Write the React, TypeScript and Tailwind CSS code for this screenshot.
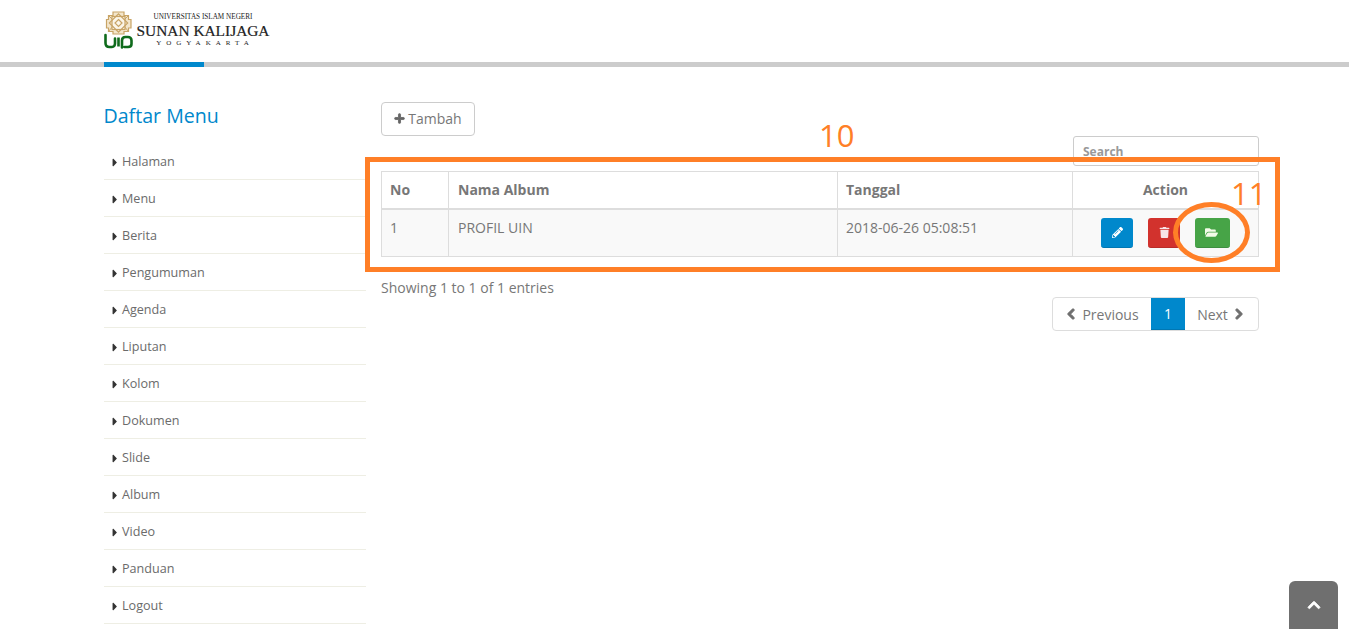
import { FaPlus, FaPencilAlt, FaTrash, FaFolderOpen, FaChevronLeft, FaChevronRight, FaChevronUp, FaCaretRight } from "react-icons/fa";

const menu = ["Halaman", "Menu", "Berita", "Pengumuman", "Agenda", "Liputan", "Kolom", "Dokumen", "Slide", "Album", "Video", "Panduan", "Logout"];

function LogoMark() {
  return (
    <svg width="29" height="38" viewBox="0 0 29 38" fill="none" className="shrink-0">
      <g stroke="#c8a466">
        <path d="M9 1H20L20 4.5L24.5 4.5L24.5 8.5L27 8.5V17L24.5 17V20.5L20 20.5V23H9V20.5L4.5 20.5V17L2.5 17V8.5L4.5 8.5V4.5L9 4.5Z" fill="#f3e6cc" strokeWidth="1.2" />
        <rect x="8" y="5.5" width="13" height="13" strokeWidth="1.2" fill="#fbf5e8" />
        <rect x="8" y="5.5" width="13" height="13" strokeWidth="1.2" transform="rotate(45 14.5 12)" />
        <path d="M14.5 8.5L18 12L14.5 15.5L11 12Z" strokeWidth="1.2" />
        <path d="M4.5 4.5L9 9M24.5 4.5L20 9M4.5 20.5L9 15M24.5 20.5L20 15" strokeWidth="1" />
      </g>
      <g stroke="#0f6b1c" strokeWidth="2.6">
        <path d="M1.5 24V32C1.5 34.5 3 36 5.5 36H8C10 36 11 34.5 11 32.5V27.5" strokeLinecap="round" />
        <path d="M14.5 26.5V35.5" />
        <path d="M18 36.5V29.5C18 27 19.5 26 21.5 26H24C26 26 27.5 27.5 27.5 29.5V33C27.5 35 26 36 24 36H20.5" strokeLinecap="round" />
      </g>
    </svg>
  );
}

export default function App() {
  return (
    <div className="relative h-[629px] overflow-hidden bg-white font-['Open_Sans',sans-serif] text-[14px] text-[#777]">
      <header className="flex h-[62px] items-start pl-[104px] pt-[11px]">
        <LogoMark />
        <div className="ml-[4px] mt-[1px] flex w-[132px] flex-col items-center font-['Liberation_Serif',serif] text-[#222]">
          <span className="mt-[1px] text-[7.2px] leading-[9px] whitespace-nowrap">UNIVERSITAS ISLAM NEGERI</span>
          <span className="text-[15.4px] leading-[17px] whitespace-nowrap [-webkit-text-stroke:0.2px_#222]">SUNAN KALIJAGA</span>
          <span className="pl-[4px] text-[7px] leading-[9px] tracking-[5px] whitespace-nowrap">YOGYAKARTA</span>
        </div>
      </header>
      <div className="h-[5px] bg-[#cccccc] pl-[104px]">
        <div className="h-full w-[100px] bg-[#0088cc]" />
      </div>

      <div className="flex pl-[104px]">
        <aside className="w-[262px] shrink-0">
          <h2 className="-ml-[0.5px] mt-[35px] text-[19.6px] leading-[28px] text-[#0088cc]">Daftar Menu</h2>
          <ul className="mt-[13px]">
            {menu.map((m) => (
              <li key={m} className="flex h-[37px] items-center border-b border-[#eeeee4] pl-[4px] pt-[2px] text-[12.6px] text-[#6b6b6b]">
                <FaCaretRight className="w-[14px] text-[13px] text-[#333]" />
                {m}
              </li>
            ))}
          </ul>
        </aside>

        <main className="ml-[15px] w-[878px] shrink-0">
          <button className="mt-[35px] flex h-[34px] w-[94px] items-center justify-center rounded border border-[#cccccc] bg-white pb-[2px] text-[14px]">
            <FaPlus className="mr-[3px] mt-[1px] text-[11px] text-[#666] [stroke-width:40]" />
            Tambah
          </button>
          <div className="flex justify-end">
            <div className="h-[30px] w-[186px] rounded-[3px] border border-[#cccccc] pl-[9px] pt-[7px] text-[12px] font-bold leading-[16px] text-[#999]">
              Search
            </div>
          </div>
          <table className="mt-[5px] w-[878px] table-fixed border-collapse">
            <thead>
              <tr className="h-[37px] font-bold">
                <th className="w-[67px] border border-b-2 border-[#dddddd] pb-[1px] pl-[8px] text-left">No</th>
                <th className="w-[389px] border border-b-2 border-[#dddddd] pb-[1px] pl-[9px] text-left">Nama Album</th>
                <th className="w-[235px] border border-b-2 border-[#dddddd] pb-[1px] pl-[8px] text-left">Tanggal</th>
                <th className="border border-b-2 border-[#dddddd] pb-[1px] text-center">Action</th>
              </tr>
            </thead>
            <tbody>
              <tr className="h-[48px] bg-[#f9f9f9]">
                <td className="border border-[#dddddd] pb-[11px] pl-[8px]">1</td>
                <td className="border border-[#dddddd] pb-[11px] pl-[9px]">PROFIL UIN</td>
                <td className="border border-[#dddddd] pb-[11px] pl-[8px]">2018-06-26 05:08:51</td>
                <td className="border border-[#dddddd] pl-[28px]">
                  <div className="flex items-center">
                    <span className="flex h-[30px] w-[32px] items-center justify-center rounded-[3px] border-b border-[#0077b3] bg-[#0088cc] text-[11px] text-white"><FaPencilAlt /></span>
                    <span className="ml-[15px] flex h-[30px] w-[32px] items-center justify-center rounded-[3px] border-b border-[#b92c28] bg-[#d2322d] text-[11px] text-[#f7e4e6]"><FaTrash /></span>
                    <span className="ml-[15px] flex h-[30px] w-[35px] items-center justify-center rounded-[3px] border-b border-[#3e8e41] bg-[#47a447] pr-[2px] text-[13px] text-[#f4fbe9]"><FaFolderOpen /></span>
                  </div>
                </td>
              </tr>
            </tbody>
          </table>
          <p className="mt-[21px] leading-[20px]">Showing 1 to 1 of 1 entries</p>
          <div className="mt-[-1px] flex justify-end">
            <div className="flex h-[34px] items-stretch rounded border border-[#dddddd]">
              <span className="flex w-[98px] items-center justify-center"><FaChevronLeft className="mr-[5px] text-[12px] text-[#6f6f6f] [stroke-width:50]" />Previous</span>
              <span className="flex w-[34px] items-center justify-center border-b border-[#0077b3] bg-[#0088cc] text-white">1</span>
              <span className="flex w-[73px] items-center justify-center pr-[1px]">Next<FaChevronRight className="ml-[5px] text-[12px] text-[#6f6f6f] [stroke-width:50]" /></span>
            </div>
          </div>
        </main>
      </div>

      <div className="pointer-events-none absolute left-[365px] top-[157px] h-[115px] w-[915px] border-[5px] border-[#ff7f27]" />
      <span className="absolute left-[819px] top-[113px] text-[31px] leading-[44px] text-[#ff7f27]">10</span>
      <span className="absolute left-[1231px] top-[171px] text-[31px] leading-[44px] text-[#ff7f27]">11</span>
      <div className="pointer-events-none absolute left-[1173px] top-[202px] h-[61px] w-[77px] rounded-[50%] border-[5px] border-[#ff7f27]" />

      <div className="absolute left-[1289px] top-[581px] flex h-[48px] w-[49px] items-center justify-center rounded-t-[6px] bg-[#6f6f6f] text-[14px] text-white">
        <FaChevronUp className="[stroke-width:30]" />
      </div>
    </div>
  );
}
